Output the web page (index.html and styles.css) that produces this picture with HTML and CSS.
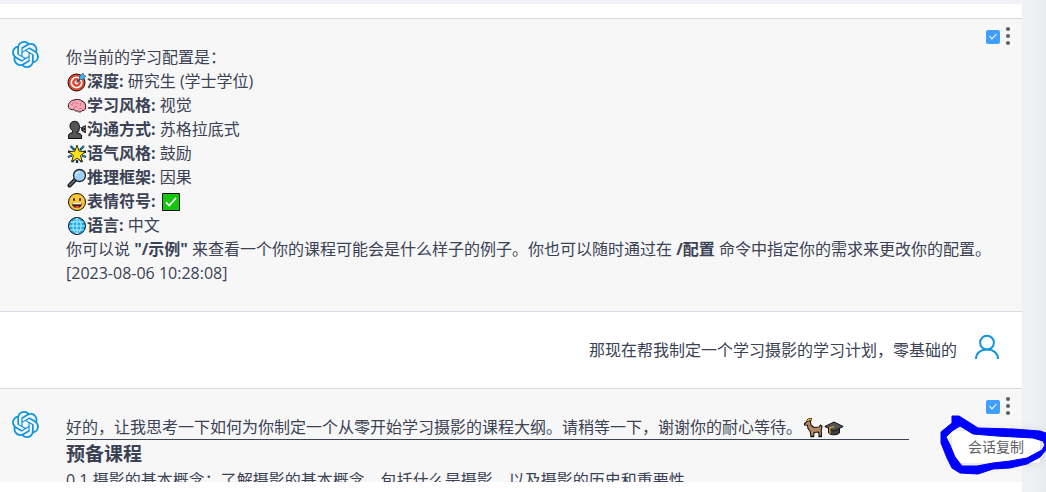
FILE: index.html
```html
<!DOCTYPE html>
<html lang="zh-CN">
<head>
    <meta charset="UTF-8">
    <meta name="viewport" content="width=device-width, initial-scale=1">
    <title>会话</title>
    <link rel="stylesheet" href="styles.css">
</head>
<body>

<!-- 图标 -->
<svg class="sprite" aria-hidden="true">
    <symbol id="icon-gpt" viewBox="0 0 24 24">
        <path d="M22.2819 9.8211a5.9847 5.9847 0 0 0-.5157-4.9108 6.0462 6.0462 0 0 0-6.5098-2.9A6.0651 6.0651 0 0 0 4.9807 4.1818a5.9847 5.9847 0 0 0-3.9977 2.9 6.0462 6.0462 0 0 0 .7427 7.0966 5.98 5.98 0 0 0 .511 4.9107 6.051 6.051 0 0 0 6.5146 2.9001A5.9847 5.9847 0 0 0 13.2599 24a6.0557 6.0557 0 0 0 5.7718-4.2058 5.9894 5.9894 0 0 0 3.9977-2.9001 6.0557 6.0557 0 0 0-.7475-7.0729zm-9.022 12.6081a4.4755 4.4755 0 0 1-2.8764-1.0408l.1419-.0804 4.7783-2.7582a.7948.7948 0 0 0 .3927-.6813v-6.7369l2.02 1.1686a.071.071 0 0 1 .038.052v5.5826a4.504 4.504 0 0 1-4.4945 4.4944zm-9.6607-4.1254a4.4708 4.4708 0 0 1-.5346-3.0137l.142.0852 4.783 2.7582a.7712.7712 0 0 0 .7806 0l5.8428-3.3685v2.3324a.0804.0804 0 0 1-.0332.0615L9.74 19.9502a4.4992 4.4992 0 0 1-6.1408-1.6464zM2.3408 7.8956a4.485 4.485 0 0 1 2.3655-1.9728V11.6a.7664.7664 0 0 0 .3879.6765l5.8144 3.3543-2.0201 1.1685a.0757.0757 0 0 1-.071 0l-4.8303-2.7865A4.504 4.504 0 0 1 2.3408 7.872zm16.5963 3.8558L13.1038 8.364 15.1192 7.2a.0757.0757 0 0 1 .071 0l4.8303 2.7913a4.4944 4.4944 0 0 1-.6765 8.1042v-5.6772a.79.79 0 0 0-.407-.667zm2.0107-3.0231l-.142-.0852-4.7735-2.7818a.7759.7759 0 0 0-.7854 0L9.409 9.2297V6.8974a.0662.0662 0 0 1 .0284-.0615l4.8303-2.7866a4.4992 4.4992 0 0 1 6.6802 4.66zM8.3065 12.863l-2.02-1.1638a.0804.0804 0 0 1-.038-.0567V6.0742a4.4992 4.4992 0 0 1 7.3757-3.4537l-.142.0805L8.704 5.459a.7948.7948 0 0 0-.3927.6813zm1.0976-2.3654l2.602-1.4998 2.6069 1.4998v2.9994l-2.5974 1.4997-2.6067-1.4997Z"/>
    </symbol>
    <symbol id="icon-user" viewBox="0 0 24 24">
        <circle cx="12" cy="7.6" r="6.9"/>
        <path d="M1 24c0-5.500 4-9.600 11-9.600s11 4.100 11 9.600"/>
    </symbol>
    <symbol id="icon-more" viewBox="0 0 6 20">
        <circle cx="3" cy="3" r="2.1"/><circle cx="3" cy="10" r="2.1"/><circle cx="3" cy="17" r="2.1"/>
    </symbol>
    <symbol id="icon-target" viewBox="0 0 20 20">
        <circle cx="9.500" cy="10.500" r="8.500" fill="#e8432a" stroke="#111"/>
        <circle cx="9.500" cy="10.500" r="5.200" fill="#e8432a" stroke="#fff" stroke-width="1.600"/>
        <circle cx="9.500" cy="10.500" r="1.900" fill="#fff"/>
        <path d="M9.500 10.500L14 6" stroke="#174a7c" stroke-width="1.500"/>
        <path d="M12.500 7.500V4.500L16 1l.8 2.200L19 4l-3.500 3.500z" fill="#35b5f0" stroke="#174a7c" stroke-width=".6"/>
    </symbol>
    <symbol id="icon-brain" viewBox="0 0 20 20">
        <path d="M1.500 11.500C.6 7.500 3.500 4.500 7 4c3-1.200 6-.6 8 1 3 .8 4.300 4 3.500 7-.4 2-2 2.800-3.500 2.600-.8 1.700-3.200 2-4.500.4-1.600.3-3-.2-3.600-1.400-2.400.5-4.600-.3-5.400-2.100z" fill="#f6a5b5" stroke="#2a1519"/>
        <path d="M4 9c1.500-.2 2-1.200 2-2.500M8 5.500c.2 1.600 1.400 2.300 3 2M7 13.500c0-2 1.200-3 3-3M14.500 6.500c-1.200.8-1.400 2-.6 3.200M12 13c1-.8 2.400-.8 3.500 0" fill="none" stroke="#c9637c" stroke-width=".9"/>
    </symbol>
    <symbol id="icon-speak" viewBox="0 0 20 20">
        <path d="M1.500 18.500v-2.700c0-1.800 1.500-2.800 4.200-3.200v-2C3.500 9.500 3 7.800 3 6c0-3 2-4.700 4.800-4.700S12 3 12 5l1.200 3-1.200.6v2.200c0 1-1 1.400-2.400 1.300v.7c3.200.4 5 1.400 5 3.200v2.500z" fill="#555" stroke="#0c0c0c"/>
        <path d="M14.500 7.500l4-2v7.500l-4-2.500z" fill="#222" stroke="#0c0c0c" stroke-width=".6"/>
        <path d="M16 8l2-.6M16 10l2 .7" stroke="#aaa" stroke-width=".7"/>
    </symbol>
    <symbol id="icon-star" viewBox="0 0 20 20">
        <path d="M3.500 2l4 4M17 2l-4 4M1 13l4-1.500M19 13l-4-1.500M10 19v-3M1 7.500l4 1M19 7.500l-4 1M5 18l2-3M15 18l-2-3" stroke="#0a4254" stroke-width="2.400"/>
        <path d="M3.500 2l3 3M17 2l-3 3M1.500 12.800l3-1.200M18.500 12.800l-3-1.200" stroke="#20a6bd" stroke-width=".9"/>
        <path d="M10 1.200l2.200 6 6.300.4-4.900 4 1.700 6.200L10 14.300l-5.300 3.500 1.700-6.200-4.900-4 6.300-.4z" fill="#ffdf18" stroke="#1c1800" stroke-width=".9"/>
    </symbol>
    <symbol id="icon-search" viewBox="0 0 20 20">
        <path d="M2.500 17.500l6-6" stroke="#111" stroke-width="4" stroke-linecap="round"/>
        <path d="M2.600 17.400l6-6" stroke="#596a78" stroke-width="2" stroke-linecap="round"/>
        <circle cx="12.500" cy="7.500" r="6" fill="#9fd0f3" stroke="#1d2a33" stroke-width="1.300"/>
        <path d="M9 8a4 4 0 0 1 4-4" fill="none" stroke="#d9f0ff" stroke-width="1.200"/>
    </symbol>
    <symbol id="icon-smile" viewBox="0 0 20 20">
        <circle cx="10" cy="10" r="8.500" fill="#fdc632" stroke="#111"/>
        <ellipse cx="7" cy="7.500" rx="1" ry="1.600" fill="#222"/><ellipse cx="13" cy="7.500" rx="1" ry="1.600" fill="#222"/>
        <path d="M4.800 11h10.400c-.3 3.200-2.300 5-5.200 5s-4.900-1.800-5.200-5z" fill="#3a1a12"/>
        <path d="M5.500 11h9v1.300h-9z" fill="#fff"/>
        <path d="M7.200 15c1-1.500 4.600-1.500 5.600 0-1.500 1.200-4.100 1.200-5.600 0z" fill="#f04836"/>
    </symbol>
    <symbol id="icon-check" viewBox="0 0 20 20">
        <path d="M1.500 1.500h17v17h-17z" fill="#16c60c" stroke="#111"/>
        <path d="M5 10.300l3.300 3.200L15 6" fill="none" stroke="#fff" stroke-width="1.700"/>
    </symbol>
    <symbol id="icon-globe" viewBox="0 0 20 20">
        <circle cx="10" cy="10" r="8.500" fill="#19aee8" stroke="#111"/>
        <path d="M10 2v16M2 10h16M3.500 6h13M3.500 14h13M10 2C4.500 6 4.500 14 10 18M10 2c5.500 4 5.500 12 0 16" fill="none" stroke="#d5f5ff" stroke-width=".9"/>
    </symbol>
    <symbol id="icon-dog" viewBox="0 0 20 20">
        <path d="M1.500 5.500L4 3.500 5.500 2l2 1.500.5 3.500 3 2.500 5-.5 1.500-2 1.500 1.500-.8 4 .3 6h-2.200l-.8-4.500-4.500.5-.3 4H8l-.8-5L5 10.500l-.5-3.200-3-.3z" fill="#b58763" stroke="#17110c" stroke-width="1.100" stroke-linejoin="round"/>
        <path d="M4.500 3C5 1.500 6.500 1 9 1.200" fill="none" stroke="#17110c" stroke-width="2.600"/>
        <path d="M4.600 3C5 1.600 6.500 1.200 8.600 1.300" fill="none" stroke="#e8b52a" stroke-width="1.400"/>
        <path d="M7.500 18.500h3.500M15.500 18.500h3" stroke="#17110c" stroke-width="1.500"/>
    </symbol>
    <symbol id="icon-cap" viewBox="0 0 20 20">
        <path d="M4.500 9v6c2.500 2.400 8.500 2.400 11 0V9z" fill="#3e3e3e" stroke="#111"/>
        <path d="M.8 8.500L10 4l9.200 4.500L10 13z" fill="#555" stroke="#111"/>
        <path d="M10 8.500L5.800 10v5.500" fill="none" stroke="#e3a52a" stroke-width="1.300"/>
    </symbol>
</svg>

<div class="page">
    <div class="main">
        <div class="chat">
            <div class="message bot">
                <svg class="avatar" aria-hidden="true"><use href="#icon-gpt"/></svg>
                <div class="text">
                    <p>你当前的学习配置是：</p>
                    <ul>
                        <li><svg class="emoji"><use href="#icon-target"/></svg><strong>深度:</strong> 研究生 (学士学位)</li>
                        <li><svg class="emoji"><use href="#icon-brain"/></svg><strong>学习风格:</strong> 视觉</li>
                        <li><svg class="emoji"><use href="#icon-speak"/></svg><strong>沟通方式:</strong> 苏格拉底式</li>
                        <li><svg class="emoji"><use href="#icon-star"/></svg><strong>语气风格:</strong> 鼓励</li>
                        <li><svg class="emoji"><use href="#icon-search"/></svg><strong>推理框架:</strong> 因果</li>
                        <li><svg class="emoji"><use href="#icon-smile"/></svg><strong>表情符号:</strong> <svg class="emoji"><use href="#icon-check"/></svg></li>
                        <li><svg class="emoji"><use href="#icon-globe"/></svg><strong>语言:</strong> 中文</li>
                    </ul>
                    <p>你可以说 <strong>"/示例"</strong> 来查看一个你的课程可能会是什么样子的例子。你也可以随时通过在 <strong>/配置</strong> 命令中指定你的需求来更改你的配置。</p>
                    <p>[2023-08-06 10:28:08]</p>
                </div>
                <div class="actions">
                    <input type="checkbox" class="check" aria-label="选择会话" checked>
                    <button type="button" class="more" aria-label="更多"><svg><use href="#icon-more"/></svg></button>
                </div>
            </div>

            <div class="message user">
                <div class="text">
                    <p>那现在帮我制定一个学习摄影的学习计划，零基础的</p>
                </div>
                <svg class="user-avatar" aria-hidden="true"><use href="#icon-user"/></svg>
            </div>

            <div class="message bot">
                <svg class="avatar" aria-hidden="true"><use href="#icon-gpt"/></svg>
                <div class="text outline">
                    <p class="intro">好的，让我思考一下如何为你制定一个从零开始学习摄影的课程大纲。请稍等一下，谢谢你的耐心等待。<svg class="emoji"><use href="#icon-dog"/></svg><svg class="emoji"><use href="#icon-cap"/></svg></p>
                    <h3>预备课程</h3>
                    <p>0.1 摄影的基本概念：了解摄影的基本概念，包括什么是摄影，以及摄影的历史和重要性。</p>
                </div>
                <div class="actions">
                    <input type="checkbox" class="check" aria-label="选择会话" checked>
                    <button type="button" class="more" aria-label="更多"><svg><use href="#icon-more"/></svg></button>
                </div>
            </div>
        </div>
    </div>
    <div class="side"></div>

    <!-- 下拉菜单 -->
    <div class="dropdown">
        <button type="button" class="dropdown-item">会话复制</button>
    </div>
    <svg class="mark" viewBox="0 0 106 60" aria-hidden="true">
        <path fill-rule="evenodd" d="M12 1H19L27 6 38 13 73 14 100 16 106 18V35L100 42 87 49 70 53 53 54 38 59 20 58 12 53 7 43 1 28V17L12 8ZM20 11L12 16 6 22 10 30 15 42 22 51H37L53 48 70 46 87 43 102 35 105 30 103 26 93 23 57 21 33 19Z"/>
    </svg>
</div>
</body>
</html>
```

FILE: styles.css
```css
body,h3,p,ul,input,button{margin:0;padding:0}
body,button{font-family:"Open Sans", "Microsoft YaHei", "Noto Sans CJK SC", sans-serif;}
body{
    font-size:16px;
    line-height:24px;
    color:#3b4254;
    background:#f0f2f5;
}
ul{list-style:none}
button{border:0;background:none;cursor:pointer;}
.sprite{
    position:absolute;
    width:0;
    height:0;
}
.page{
    position:relative;
    display:flex;
    height:100vh;
    overflow:hidden;
}
.main{
    flex:1;
    min-width:0;
    display:flex;
    flex-direction:column;
    margin-top:4px;
    padding:14px 0 10px;
    box-sizing:border-box;
    background:#fff;
}
.side{
    width:24px;
    background:linear-gradient(to right, #f0f1f5 50%, #e8eaee);
}
.chat{
    flex:1;
    min-height:0;
    overflow:hidden;
}
.message{
    position:relative;
    display:flex;
    align-items:flex-start;
    gap:27px;
    padding:22px 12px;
    border-top:1px solid #d9d9e3;
}
.message .text{
    flex:1;
    min-width:0;
    padding:4px 0;
}
.bot{
    background:#f7f7f7;
}
.avatar{
    flex:none;
    width:27px;
    height:27px;
    fill:#1296db;
}
.user{
    align-items:center;
    gap:18px;
    padding-right:23px;
    text-align:right;
}
.user-avatar{
    flex:none;
    width:24px;
    height:30px;
    fill:none;
    stroke:#1296db;
    stroke-width:2;
    margin-top:-6px;
}
.emoji{
    width:20px;
    height:20px;
    margin:0 0 2px 1px;
    vertical-align:middle;
}
li,.intro{
    height:24px;
    white-space:nowrap;
}
.message .outline{
    margin-right:101px;
}
.intro{
    border-bottom:1px solid #3b4254;
}
h3{
    font-size:19px;
    line-height:28px;
}
.actions{
    position:absolute;
    top:7px;
    right:11px;
    display:flex;
    align-items:center;
    gap:5px;
}
.check{
    appearance:none;
    width:14px;
    height:14px;
    margin-top:2px;
    border-radius:2px;
    background:#409eff;
    display:flex;
    justify-content:center;
}
.check:checked::after{
    content:"";
    width:3px;
    height:6px;
    margin-top:2px;
    border:solid #fff;
    border-width:0 1px 1px 0;
    transform:rotate(45deg);
}
.more{
    width:6px;
    height:20px;
}
.more svg{
    display:block;
    width:6px;
    height:20px;
    fill:#606266;
}
/* 下拉菜单及标记 */
.dropdown{
    position:absolute;
    top:431px;
    right:6px;
    padding:4px 0;
    border-radius:4px;
    background:#fff;
    box-shadow:0 0 12px rgba(0,0,0,.12);
}
.dropdown::before{
    content:"";
    position:absolute;
    top:-4px;
    right:28px;
    width:8px;
    height:8px;
    background:#fff;
    transform:rotate(45deg);
}
.dropdown-item{
    display:block;
    padding:0 16px;
    font-size:14px;
    line-height:24px;
    color:#606266;
}
.mark{
    position:absolute;
    top:415px;
    right:0;
    width:106px;
    height:60px;
    fill:#00f;
    stroke:#00f;
    stroke-width:1;
    stroke-linejoin:round;
    pointer-events:none;
}
```
